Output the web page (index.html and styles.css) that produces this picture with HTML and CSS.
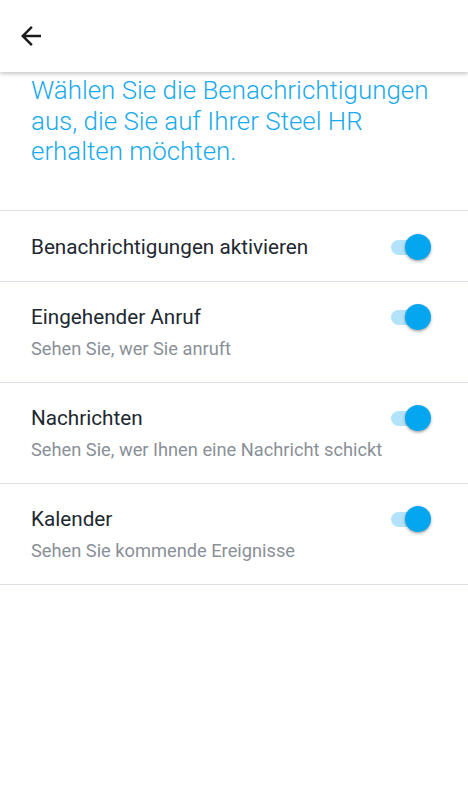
FILE: index.html
```html
<!DOCTYPE html>
<html lang="de">
<head>
<meta charset="utf-8">
<link rel="stylesheet" href="styles.css">
</head>
<body>
<header class="appbar">
  <svg class="back" width="30" height="30" viewBox="0 0 24 24"><path d="M20 11H7.83l5.59-5.59L12 4l-8 8 8 8 1.41-1.41L7.83 13H20v-2z" fill="#1c1c1c"/></svg>
</header>
<main>
  <p class="intro">Wählen Sie die Benachrichtigungen aus, die Sie auf Ihrer Steel HR erhalten möchten.</p>
  <ul class="list">
    <li class="row row-single">
      <div class="texts"><div class="title">Benachrichtigungen aktivieren</div></div>
      <span class="switch"><span class="track"></span><span class="thumb"></span></span>
    </li>
    <li class="row">
      <div class="texts"><div class="title">Eingehender Anruf</div><div class="sub">Sehen Sie, wer Sie anruft</div></div>
      <span class="switch"><span class="track"></span><span class="thumb"></span></span>
    </li>
    <li class="row">
      <div class="texts"><div class="title">Nachrichten</div><div class="sub">Sehen Sie, wer Ihnen eine Nachricht schickt</div></div>
      <span class="switch"><span class="track"></span><span class="thumb"></span></span>
    </li>
    <li class="row">
      <div class="texts"><div class="title">Kalender</div><div class="sub">Sehen Sie kommende Ereignisse</div></div>
      <span class="switch"><span class="track"></span><span class="thumb"></span></span>
    </li>
  </ul>
</main>
</body>
</html>
```
FILE: styles.css
```css
* { box-sizing: border-box; }
html, body { margin: 0; padding: 0; background: #fff; }
body { font-family: Roboto, "Noto Sans", sans-serif; width: 468px; height: 800px; overflow: hidden; }
.appbar {
  height: 72px;
  display: flex;
  align-items: center;
  padding-left: 16px;
  background: #fff;
  box-shadow: 0 2px 4px rgba(0,0,0,0.22);
  position: relative;
  z-index: 1;
}
.back { display: block; }
.intro {
  margin: 0;
  padding: 3px 26px 0 31px;
  height: 138px;
  color: #1aaaee;
  font-size: 25.9px;
  line-height: 30.5px;
  font-weight: 300;
}
.list { list-style: none; margin: 0; padding: 0; border-top: 1px solid #dde2e8; }
.row {
  display: flex;
  align-items: flex-start;
  justify-content: space-between;
  height: 101px;
  padding: 20px 36px 0 31px;
  border-bottom: 1px solid #dde2e8;
}
.row-single { height: 71px; align-items: center; padding-top: 0; }
.row-single .title { padding-top: 2px; }
.title { color: #212830; font-size: 20.7px; line-height: 30px; }
.sub { color: #8a9097; font-size: 18.25px; line-height: 24px; margin-top: 5px; }
.switch { position: relative; width: 42px; height: 28px; flex: none; margin-top: 1px; }
.track {
  position: absolute; left: 1px; top: 7px; width: 34px; height: 15px;
  border-radius: 8px; background: #b3e3fb;
}
.thumb {
  position: absolute; left: 15px; top: 1px; width: 26px; height: 26px;
  border-radius: 50%; background: #03a6ef;
  box-shadow: 0 1.5px 3px rgba(0,0,0,0.35);
}
```
